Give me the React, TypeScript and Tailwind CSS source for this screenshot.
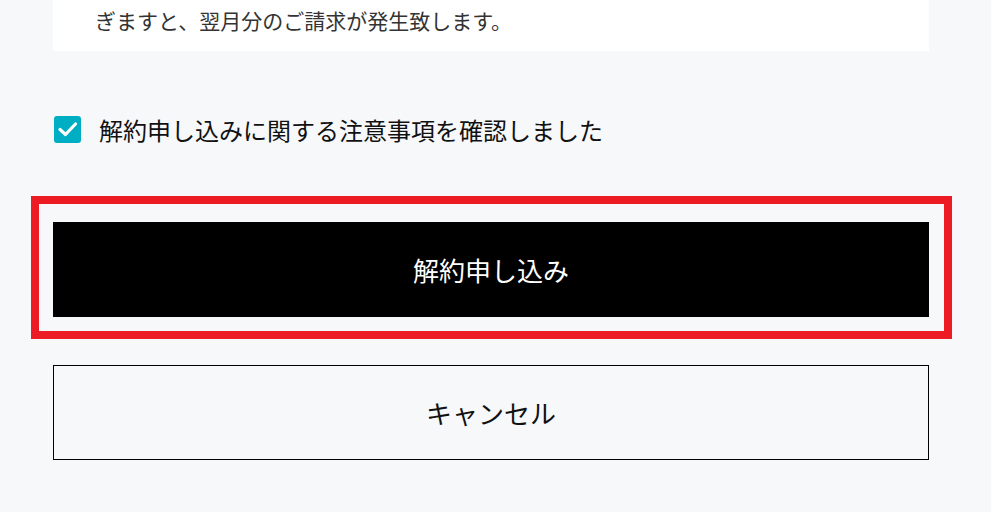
import React from "react";

export default function App() {
  return (
    <div
      className="w-[991px] h-[512px] overflow-hidden bg-[#f7f8fa]"
      style={{ fontFamily: '"Noto Sans CJK JP", "Noto Sans", sans-serif' }}
    >
      <div className="ml-[53px] w-[876px] bg-white pl-[42px] pt-[4px] pb-[15px]">
        <p className="text-[21px] leading-[32px] text-[#333333]">
          ぎますと、翌月分のご請求が発生致します。
        </p>
      </div>

      <label className="ml-[54px] mt-[65px] flex items-center gap-[18px] h-[27px]">
        <span className="flex h-[27px] w-[27px] items-center justify-center rounded-[3px] bg-[#00aec4]">
          <svg width="21" height="17" viewBox="0 0 21 17" fill="none">
            <path
              d="M3 8.5 L8.5 13.5 L18.5 3"
              stroke="white"
              strokeWidth="3.2"
              strokeLinecap="round"
              strokeLinejoin="round"
            />
          </svg>
        </span>
        <span className="text-[24px] leading-[27px] text-[#111111]">
          解約申し込みに関する注意事項を確認しました
        </span>
      </label>

      <div className="ml-[31px] mt-[53px] w-[921px] border-[8px] border-[#ed1c24] pt-[18px] pb-[14px] pl-[14px] pr-[15px]">
        <button className="flex h-[95px] w-[876px] items-center justify-center bg-black text-[26px] text-white">
          解約申し込み
        </button>
      </div>

      <button className="ml-[53px] mt-[26px] flex h-[95px] w-[876px] items-center justify-center border border-black text-[26px] text-[#111111]">
        キャンセル
      </button>
    </div>
  );
}
